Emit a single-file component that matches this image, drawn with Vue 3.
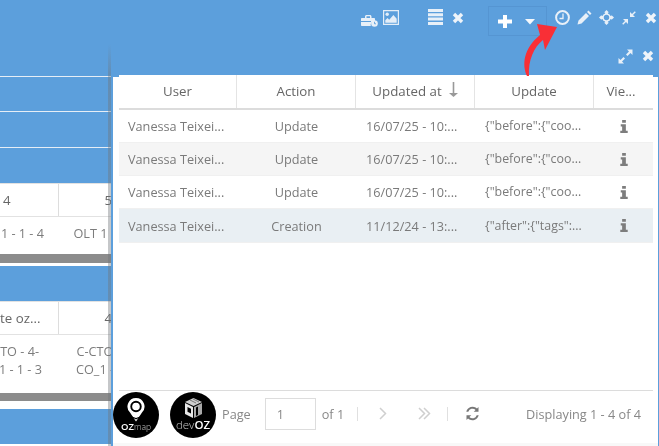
<script setup>
const rows = [
  { user: 'Vanessa Teixei...', action: 'Update', date: '16/07/25 - 10:...', update: '{"before":{"coo...', cls: '' },
  { user: 'Vanessa Teixei...', action: 'Update', date: '16/07/25 - 10:...', update: '{"before":{"coo...', cls: 'odd' },
  { user: 'Vanessa Teixei...', action: 'Update', date: '16/07/25 - 10:...', update: '{"before":{"coo...', cls: '' },
  { user: 'Vanessa Teixei...', action: 'Creation', date: '11/12/24 - 13:...', update: '{"after":{"tags":...', cls: 'sel' }
]
</script>

<template>
  <div class="page">
    <div class="backdrop">
      <div class="band b1"></div>
      <div class="band b2"></div>
      <div class="band b3"></div>
      <div class="band b4"></div>
      <div class="tbl">
        <div class="thead"><span class="c1 first">4</span><span class="c2">5</span></div>
        <div class="tbody one"><span class="c1 v1">1 - 1 - 4</span><span class="c2 o1">OLT 1</span></div>
      </div>
      <div class="scroll s1"></div>
      <div class="band b5"></div>
      <div class="tbl">
        <div class="thead"><span class="c1 first flush">te oz...</span><span class="c2">4</span></div>
        <div class="tbody two">
          <span class="c1 v1 v2"><span class="tl">TO - 4-</span><br />1 - 1 - 3</span>
          <span class="c2 o2">C-CTO<br />CO_1 -</span>
        </div>
      </div>
      <div class="scroll s2"></div>
      <div class="band b6"></div>
    </div>

    <div class="topbar">
      <svg class="ic" style="left:361px;top:15px" width="17" height="12" viewBox="0 0 17 12"><path d="M4 3V1.500C4 .7 4.700 0 5.500 0H9C9.800 0 10.500 .7 10.500 1.500V3H13C13.600 3 14 3.400 14 4V6.200A3.700 3.700 0 0 0 9.800 11H1C.4 11 0 10.600 0 10V4C0 3.400 .4 3 1 3ZM5.500 1.300V3H9V1.300Z" fill="#e8f0f8" fill-rule="evenodd"/><rect x="0" y="6" width="10" height="1" fill="#5c9fdc"/><circle cx="13.500" cy="8.500" r="3.300" fill="#e8f0f8"/><path d="M13.500 6.800V8.800H15" fill="none" stroke="#5c9fdc" stroke-width=".9"/></svg>
      <svg class="ic" style="left:383px;top:10px" width="16" height="15" viewBox="0 0 16 15"><path d="M0 0h16v15H0zM1.200 1.200v12.600h13.600V1.200z" fill="#e4eef8" fill-rule="evenodd"/><circle cx="4.200" cy="4.200" r="1.700" fill="#e4eef8"/><path d="M2.300 12.800V10.200L4.500 8 6.200 9.700 10.400 5 13.700 8.800v4Z" fill="#e4eef8"/></svg>
      <svg class="ic" style="left:428px;top:9px" width="15" height="16" viewBox="0 0 15 16"><path d="M0 0h15v3H0zM0 4.300h15v3H0zM0 8.600h15v3H0zM0 13h15v3H0z" fill="#e8f0f8"/></svg>
      <svg class="ic" style="left:452px;top:12px" width="12" height="12" viewBox="0 0 12 12"><path d="M2 2 10 10M10 2 2 10" stroke="#eef4fa" stroke-width="3.400" fill="none"/></svg>
      <div class="splitbox">
        <svg width="14" height="13" viewBox="0 0 14 13"><path d="M5 0h4v4.500h5v4H9V13H5V8.500H0v-4h5Z" fill="#fff"/></svg>
        <svg width="10" height="6" viewBox="0 0 10 6"><path d="M0 0h10L5 5.500Z" fill="#f4f8fc"/></svg>
      </div>
      <svg class="ic" style="left:555px;top:10px" width="15" height="15" viewBox="0 0 15 15"><circle cx="7.500" cy="7.500" r="6.400" fill="none" stroke="#e8f0f8" stroke-width="2"/><path d="M8 3.500V8.500H4.500" fill="none" stroke="#e8f0f8" stroke-width="1.300"/></svg>
      <svg class="ic" style="left:577px;top:10px" width="15" height="15" viewBox="0 0 15 15"><path d="M11.500 .5 14.500 3.500 13 5 10 2ZM9 3 12 6 4.500 13.500 .5 14.500 1.500 10.500Z" fill="#e8f0f8"/></svg>
      <svg class="ic" style="left:599px;top:10px" width="15" height="15" viewBox="0 0 15 15"><path d="M7.500 0 10 2.600H8.900V3.400A4.200 4.200 0 0 1 11.600 6.100H12.400V5L15 7.500 12.400 10V8.900H11.600A4.200 4.200 0 0 1 8.900 11.600V12.400H10L7.500 15 5 12.400H6.100V11.600A4.200 4.200 0 0 1 3.400 8.900H2.600V10L0 7.500 2.600 5V6.100H3.400A4.200 4.200 0 0 1 6.100 3.400V2.600H5ZM7.500 4.800A2.700 2.700 0 1 0 7.500 10.200 2.700 2.700 0 0 0 7.500 4.800Z" fill="#e8f0f8" fill-rule="evenodd"/></svg>
      <svg class="ic" style="left:622px;top:11px" width="14" height="14" viewBox="0 0 14 14"><path d="M8 1V6H13L11 4 13.800 1.200 12.800 .2 10 3ZM6 13V8H1L3 10 .2 12.800 1.200 13.800 4 11Z" fill="#e8f0f8"/></svg>
      <svg class="ic" style="left:645px;top:12px" width="12" height="12" viewBox="0 0 12 12"><path d="M2 2 10 10M10 2 2 10" stroke="#eef4fa" stroke-width="3.400" fill="none"/></svg>
    </div>

    <section class="modal">
      <div class="modal-head">
        <svg width="15" height="15" viewBox="0 0 15 15"><path d="M14.500 .5V6L12.500 4 9.500 7 8 5.500 11 2.500 9 .5ZM.5 14.500V9L2.500 11 5.500 8 7 9.500 4 12.500 6 14.500Z" fill="#e8f0f8"/></svg>
        <svg width="12" height="12" viewBox="0 0 12 12"><path d="M2 2 10 10M10 2 2 10" stroke="#eef4fa" stroke-width="3.400" fill="none"/></svg>
      </div>
      <div class="modal-body">
        <div class="grid head">
          <div class="th">User</div>
          <div class="th">Action</div>
          <div class="th">Updated at
            <svg class="sort" width="9" height="15" viewBox="0 0 9 15"><path d="M3.700 0h1.600v11H9L4.500 15 0 11h3.700Z" fill="#999"/></svg>
          </div>
          <div class="th">Update</div>
          <div class="th last">Vie...</div>
        </div>
        <div v-for="(r, i) in rows" :key="i" class="grid row" :class="r.cls">
          <div class="td left">{{ r.user }}</div>
          <div class="td">{{ r.action }}</div>
          <div class="td date">{{ r.date }}</div>
          <div class="td upd">{{ r.update }}</div>
          <div class="td">
            <svg width="8" height="13" viewBox="0 0 8 14"><path d="M2 0h4v3H2ZM.5 4.500H6V11.500H8V14H0V11.500H2V7H.5Z" fill="#7d7d7d"/></svg>
          </div>
        </div>
        <div class="spacer"></div>
        <footer class="pager">
          <span class="pg-label">Page</span>
          <span class="pg-input">1</span>
          <span class="pg-of">of 1</span>
          <i class="sep"></i>
          <svg class="chev" width="8" height="13" viewBox="0 0 8 13"><path d="M1 1 6.500 6.500 1 12" fill="none" stroke="#cfcfcf" stroke-width="1.500"/></svg>
          <svg class="chev2" width="13" height="13" viewBox="0 0 13 13"><path d="M1 1 6.500 6.500 1 12M6 1 11.500 6.500 6 12" fill="none" stroke="#cfcfcf" stroke-width="1.500"/></svg>
          <i class="sep sep2"></i>
          <svg class="refresh" width="15" height="15" viewBox="0 0 15 15"><path d="M13.500 1V5.800H8.700L10.600 3.900A4.500 4.500 0 0 0 3.300 5.800H1.300A6.500 6.500 0 0 1 12 2.500ZM1.500 14V9.200H6.300L4.400 11.100A4.500 4.500 0 0 0 11.700 9.200H13.700A6.500 6.500 0 0 1 3 12.500Z" fill="#777"/></svg>
          <span class="display">Displaying 1 - 4 of 4</span>
        </footer>
      </div>
    </section>

    <div class="logo l1">
      <svg width="18" height="24" viewBox="0 0 18 24"><path d="M9 0A8.500 8.500 0 0 1 15 14.500L9 23.500 3 14.500A8.500 8.500 0 0 1 9 0ZM9 2.800A5.700 5.700 0 1 0 9 14.200 5.700 5.700 0 0 0 9 2.800Z" fill="#fff" fill-rule="evenodd"/><circle cx="9" cy="8.500" r="3.800" fill="#fff"/><path d="M1 17 9 20 17 17 9 21.500Z" fill="#000"/></svg>
      <span class="logo-t"><b>OZ</b><em>map</em></span>
    </div>
    <div class="logo l2">
      <svg width="19" height="20" viewBox="0 0 19 20"><path d="M9.500 0 18 4 9.500 8 1 4Z" fill="#cfcfcf"/><path d="M1 5 9 9V20L1 16Z" fill="#e8e8e8"/><path d="M10 9 18 5V16L10 20Z" fill="#aaa"/><path d="M3.500 9 7 10.800V15.500L3.500 13.700ZM12 9.500 14 8.500V17L12 18Z" fill="#000"/><path d="M6 2 12 5M9 1 15 4" stroke="#555" stroke-width=".7"/></svg>
      <span class="logo-t dev"><em>dev</em><b>OZ</b></span>
    </div>

    <svg class="arrow" width="40" height="58" viewBox="0 0 40 58"><path d="M8 56C3 45 4 29 21 15L18 4 38 7 26 30 24 20C15 27 9 40 10 56Z" fill="#f92f36"/></svg>
  </div>
</template>

<style scoped>
.page {
  position: relative;
  width: 659px;
  height: 446px;
  overflow: hidden;
  background: #fff;
  font-family: "Open Sans", sans-serif;
  color: #7a7a7a;
  filter: blur(0.35px);
}
.backdrop {
  display: flex;
  flex-direction: column;
  width: 100%;
}
.band { background: #5c9fdc; box-sizing: border-box; border-bottom: 1px solid #e6eef6; }
.b1 { height: 77px; }
.b2 { height: 35px; }
.b3 { height: 36px; }
.b4 { height: 35px; border-bottom: 0; }
.b5 { height: 35px; border-bottom: 0; }
.b6 { height: 35px; border-bottom: 0; }
.tbl { background: #fff; }
.thead {
  height: 34px;
  display: flex;
  align-items: center;
  font-size: 13.300px;
  color: #666;
  box-sizing: border-box;
  border-top: 1px solid #e2e2e2;
  border-bottom: 1px solid #e2e2e2;
}
.thead .c1 { height: 100%; line-height: 32px; border-right: 1px solid #ddd; box-sizing: border-box; }
.c1 { width: 59px; text-align: left; flex: none; }
.c2 { width: 60px; text-align: center; flex: none; box-sizing: border-box; white-space: nowrap; }
.thead .first { padding-left: 3px; }
.thead .first.flush { padding-left: 0; }
.thead .c2 { text-align: right; padding-right: 7px; }
.tbody { display: flex; line-height: 18px; color: #7c7c7c; font-size: 12.700px; box-sizing: border-box; }
.one { height: 37px; padding-top: 7px; }
.two { height: 58px; padding-top: 7px; }
.v1 { text-align: right; padding-right: 15px; box-sizing: border-box; white-space: nowrap; width: 69px; margin-left: -10px; }
.v2 { padding-right: 17px; }
.tl { padding-right: 3px; }
.o1 { padding-left: 3px; }
.o2 { padding-left: 12px; }
.scroll { background: #8c8c8c; }
.s1 { height: 9px; margin-bottom: 3px; }
.s2 { height: 8px; margin-bottom: 8px; }

.topbar { position: absolute; inset: 0 0 auto 0; height: 44px; }
.ic { position: absolute; }
.splitbox {
  position: absolute;
  left: 488px;
  top: 6px;
  width: 59px;
  height: 30px;
  box-sizing: border-box;
  border: 1px solid #5595d2;
  display: flex;
  align-items: center;
  gap: 13px;
  padding: 1px 0 0 9px;
}

.modal {
  position: absolute;
  left: 111px;
  top: 44px;
  width: 548px;
  height: 402px;
  box-sizing: border-box;
  background: #5c9fdc;
  padding-right: 1px;
  display: flex;
  flex-direction: column;
}
.modal::before {
  content: "";
  position: absolute;
  left: -3px;
  top: 0;
  bottom: 0;
  width: 3px;
  background: linear-gradient(rgba(110, 115, 120, 0), rgba(110, 115, 120, 0.4) 30px);
}
.modal-head {
  height: 33px;
  flex: none;
  display: flex;
  justify-content: flex-end;
  align-items: center;
  gap: 9px;
  padding: 0 4px 9px 0;
  box-sizing: border-box;
}
.modal-body {
  flex: 1;
  min-height: 0;
  margin-left: 2px;
  background: linear-gradient(#fff calc(100% - 3px), #f8f8f8 0);
  padding-left: 6px;
  display: flex;
  flex-direction: column;
}
.grid {
  width: 534px;
  display: grid;
  grid-template-columns: 118px 119px 119px 119px 59px;
  text-align: center;
}
.head {
  height: 35px;
  margin-top: -2px;
  background: #fff;
  border-bottom: 2px solid #dcdcdc;
  box-sizing: border-box;
  font-size: 13.300px;
  color: #666;
  flex: none;
}
.th {
  line-height: 30px;
  border-right: 1px solid #e4e4e4;
  display: flex;
  align-items: center;
  justify-content: center;
  gap: 7px;
  white-space: nowrap;
  padding-bottom: 2px;
  box-sizing: border-box;
}
.th.last { border-right: 0; padding-right: 5px; }
.sort { margin-top: -2px; }
.row {
  height: 33px;
  font-size: 12.700px;
  color: #7a7a7a;
  border-bottom: 1px solid #f0f0f0;
  box-sizing: border-box;
  flex: none;
  align-items: center;
  line-height: 32px;
  white-space: nowrap;
}
.row.odd { background: #f5f5f5; }
.row.sel { background: #e9eff3; height: 34px; }
.td { display: flex; align-items: center; justify-content: center; height: 100%; }
.td.left { justify-content: flex-start; padding-left: 9px; }
.td.date { justify-content: flex-start; padding-left: 10px; }
.td.upd { justify-content: flex-start; padding-left: 10px; font-size: 12.400px; }
.spacer { flex: 1; }
.pager {
  width: 534px;
  height: 56px;
  flex: none;
  border-top: 1px solid #dcdcdc;
  box-sizing: border-box;
  display: flex;
  align-items: center;
  font-size: 12.700px;
  color: #888;
  padding-bottom: 10px;
}
.pg-label { margin-left: 103px; }
.pg-input {
  margin-left: 14px;
  width: 51px;
  height: 32px;
  box-sizing: border-box;
  border: 1px solid #ddd;
  padding-left: 11px;
  line-height: 30px;
}
.pg-of { margin-left: 6px; }
.sep { width: 1px; height: 14px; background: #e0e0e0; margin-left: 13px; }
.chev { margin-left: 21px; }
.chev2 { margin-left: 31px; }
.sep2 { margin-left: 16px; }
.refresh { margin-left: 17px; }
.display { margin-left: auto; padding-right: 12px; }
.logo {
  position: absolute;
  top: 392px;
  width: 46px;
  height: 46px;
  border-radius: 50%;
  background: #000;
  display: flex;
  flex-direction: column;
  align-items: center;
  color: #fff;
  overflow: hidden;
  box-sizing: border-box;
}
.l1 { left: 113px; padding-top: 6px; }
.l2 { left: 170px; padding-top: 6px; }
.logo-t { white-space: nowrap; line-height: 10px; }
.l1 .logo-t { font-size: 9.500px; margin-top: 0; }
.l2 .logo-t { font-size: 11.500px; margin-top: 2px; }
.logo-t b { font-weight: 600; }
.logo-t em { font-style: normal; font-weight: 300; opacity: 0.75; }
.l1 .logo-t em { font-size: 8.500px; }
.arrow { position: absolute; left: 519px; top: 20px; }
</style>
